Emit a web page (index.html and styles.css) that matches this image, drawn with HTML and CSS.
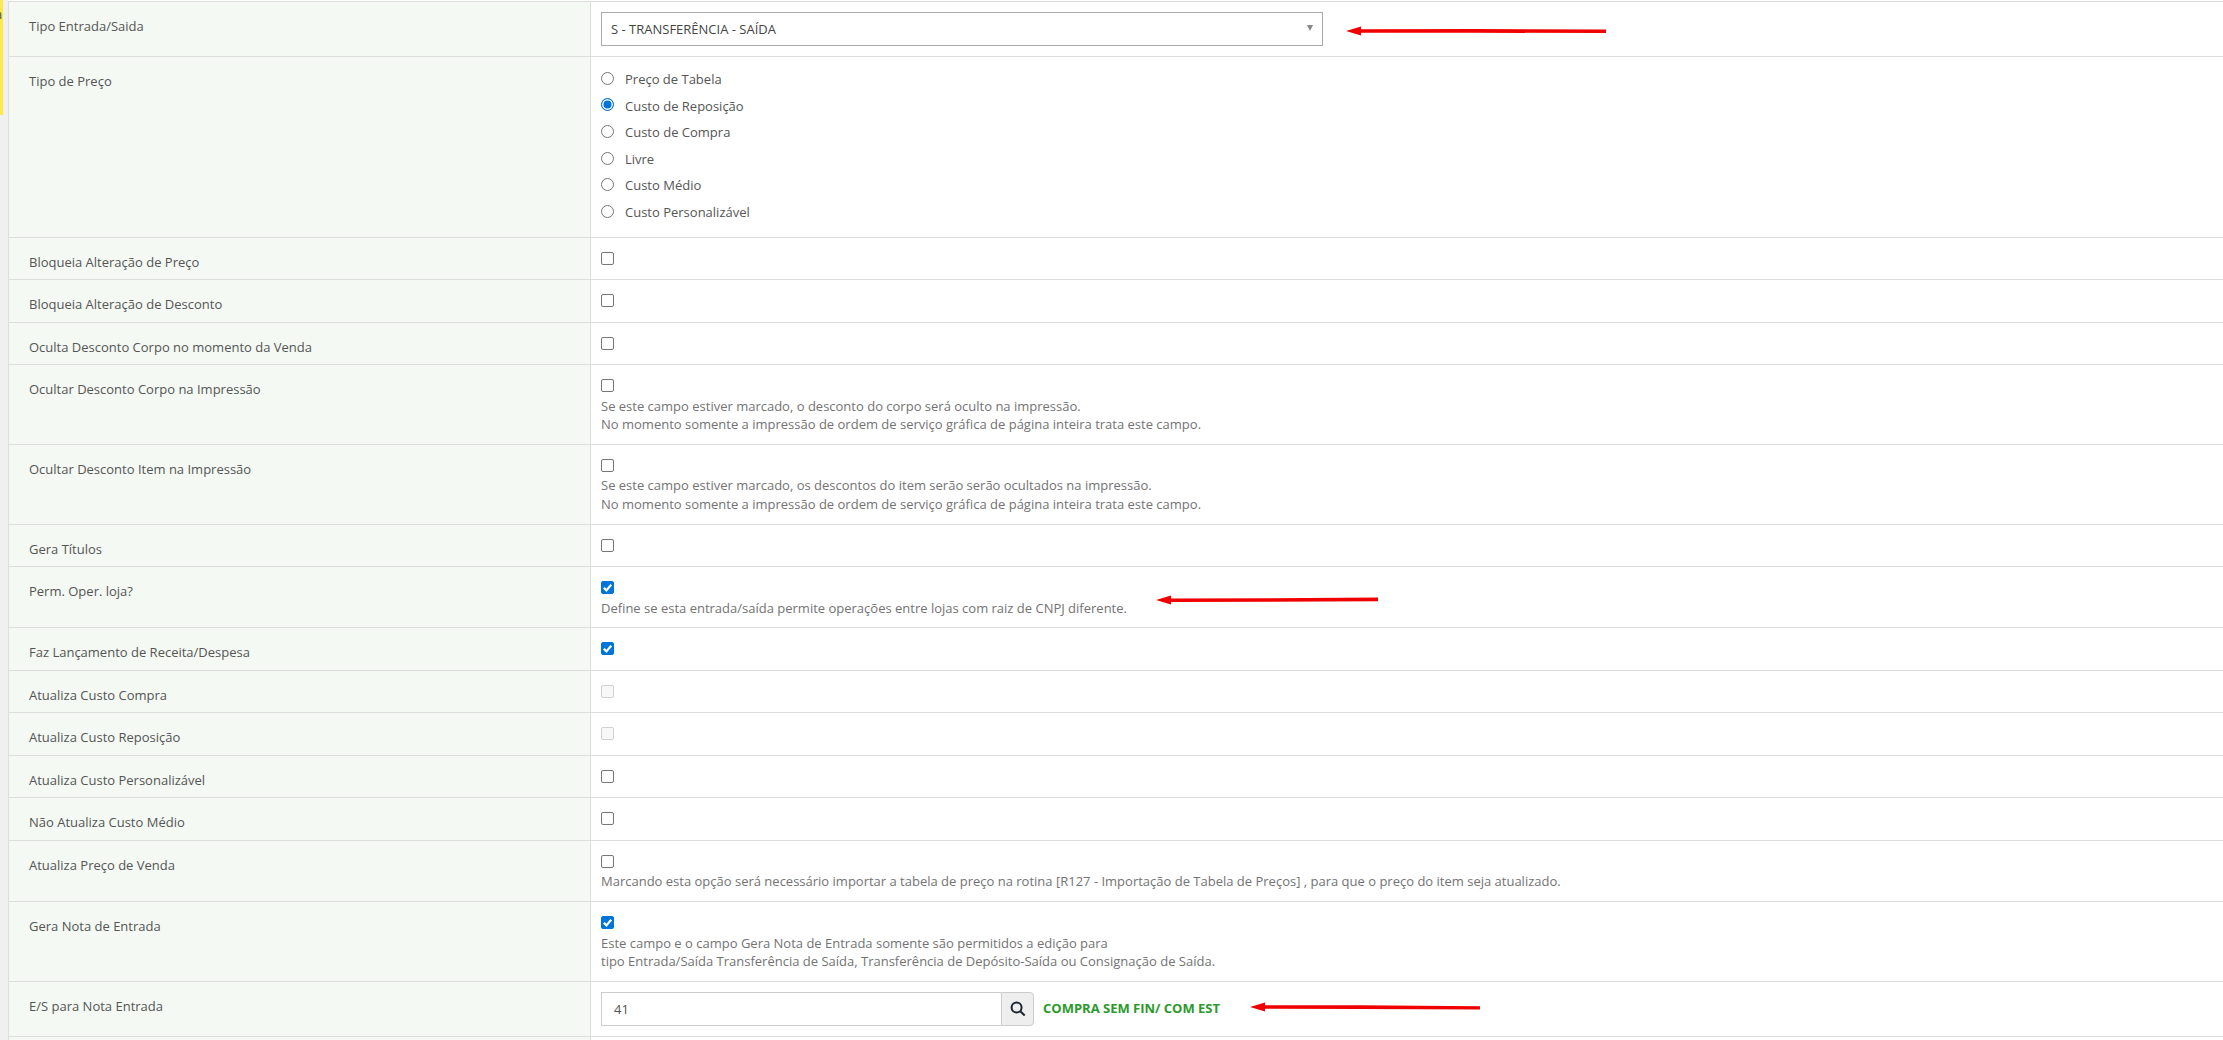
FILE: index.html
```html
<!DOCTYPE html>
<html lang="pt-BR">
<head>
  <meta charset="UTF-8"/>
  <title>Tipo Entrada/Saida</title>
  <link rel="stylesheet" href="styles.css">
</head>
<body>
  <div class="side-strip"><span class="side-letter">a</span></div>

  <table class="form-table">
    <tr>
      <td class="label">Tipo Entrada/Saida</td>
      <td class="value">
        <div class="select-box">
          <span>S - TRANSFERÊNCIA - SAÍDA</span>
          <i class="select-caret"></i>
        </div>
      </td>
    </tr>
    <tr>
      <td class="label">Tipo de Preço</td>
      <td class="value">
        <label class="radio-line"><i class="radio"></i>Preço de Tabela</label>
        <label class="radio-line"><i class="radio on"></i>Custo de Reposição</label>
        <label class="radio-line"><i class="radio"></i>Custo de Compra</label>
        <label class="radio-line"><i class="radio"></i>Livre</label>
        <label class="radio-line"><i class="radio"></i>Custo Médio</label>
        <label class="radio-line"><i class="radio"></i>Custo Personalizável</label>
      </td>
    </tr>
    <tr>
      <td class="label">Bloqueia Alteração de Preço</td>
      <td class="value"><div class="check-line"><i class="check"></i></div></td>
    </tr>
    <tr>
      <td class="label">Bloqueia Alteração de Desconto</td>
      <td class="value"><div class="check-line"><i class="check"></i></div></td>
    </tr>
    <tr>
      <td class="label">Oculta Desconto Corpo no momento da Venda</td>
      <td class="value"><div class="check-line"><i class="check"></i></div></td>
    </tr>
    <tr>
      <td class="label">Ocultar Desconto Corpo na Impressão</td>
      <td class="value">
        <div class="check-line"><i class="check"></i></div>
        <p class="note">Se este campo estiver marcado, o desconto do corpo será oculto na impressão.<br>No momento somente a impressão de ordem de serviço gráfica de página inteira trata este campo.</p>
      </td>
    </tr>
    <tr>
      <td class="label">Ocultar Desconto Item na Impressão</td>
      <td class="value">
        <div class="check-line"><i class="check"></i></div>
        <p class="note">Se este campo estiver marcado, os descontos do item serão serão ocultados na impressão.<br>No momento somente a impressão de ordem de serviço gráfica de página inteira trata este campo.</p>
      </td>
    </tr>
    <tr>
      <td class="label">Gera Títulos</td>
      <td class="value"><div class="check-line"><i class="check"></i></div></td>
    </tr>
    <tr>
      <td class="label">Perm. Oper. loja?</td>
      <td class="value">
        <div class="check-line"><i class="check on"><svg viewBox="0 0 13 13"><path d="M2.8 6.8l2.6 2.6L10.2 3.8"/></svg></i></div>
        <p class="note">Define se esta entrada/saída permite operações entre lojas com raiz de CNPJ diferente.</p>
      </td>
    </tr>
    <tr>
      <td class="label">Faz Lançamento de Receita/Despesa</td>
      <td class="value"><div class="check-line"><i class="check on"><svg viewBox="0 0 13 13"><path d="M2.8 6.8l2.6 2.6L10.2 3.8"/></svg></i></div></td>
    </tr>
    <tr>
      <td class="label">Atualiza Custo Compra</td>
      <td class="value"><div class="check-line"><i class="check off"></i></div></td>
    </tr>
    <tr>
      <td class="label">Atualiza Custo Reposição</td>
      <td class="value"><div class="check-line"><i class="check off"></i></div></td>
    </tr>
    <tr>
      <td class="label">Atualiza Custo Personalizável</td>
      <td class="value"><div class="check-line"><i class="check"></i></div></td>
    </tr>
    <tr>
      <td class="label">Não Atualiza Custo Médio</td>
      <td class="value"><div class="check-line"><i class="check"></i></div></td>
    </tr>
    <tr>
      <td class="label">Atualiza Preço de Venda</td>
      <td class="value">
        <div class="check-line"><i class="check"></i></div>
        <p class="note">Marcando esta opção será necessário importar a tabela de preço na rotina [R127 - Importação de Tabela de Preços] , para que o preço do item seja atualizado.</p>
      </td>
    </tr>
    <tr>
      <td class="label">Gera Nota de Entrada</td>
      <td class="value">
        <div class="check-line"><i class="check on"><svg viewBox="0 0 13 13"><path d="M2.8 6.8l2.6 2.6L10.2 3.8"/></svg></i></div>
        <p class="note">Este campo e o campo Gera Nota de Entrada somente são permitidos a edição para<br>tipo Entrada/Saída Transferência de Saída, Transferência de Depósito-Saída ou Consignação de Saída.</p>
      </td>
    </tr>
    <tr>
      <td class="label">E/S para Nota Entrada</td>
      <td class="value">
        <div class="lookup">
          <div class="lookup-input">41</div>
          <div class="lookup-btn">
            <svg viewBox="0 0 16 16"><circle cx="6.6" cy="6.6" r="5"/><path d="M10.3 10.3l4.4 4.2"/></svg>
          </div>
          <span class="lookup-name">COMPRA SEM FIN/ COM EST</span>
        </div>
      </td>
    </tr>
    <tr>
      <td class="label"></td>
      <td class="value"></td>
    </tr>
  </table>

  <!-- red annotation arrows drawn over the print -->
  <svg class="arrow arrow-select" viewBox="0 0 260 10"><path d="M0 5L15 .5V3.2L130 3L260 3.4V7L130 6.8L15 6.8V9.5Z"/></svg>
  <svg class="arrow arrow-loja" viewBox="0 0 222 10"><path d="M0 5L15 .5V3.4L110 3.2L222 2.6V6.2L110 6.8L15 7V9.5Z"/></svg>
  <svg class="arrow arrow-nota" viewBox="0 0 230 10"><path d="M0 5L15 .5V3.2L110 3.2L230 4.2V7.6L110 7L15 6.8V9.5Z"/></svg>
</body>
</html>
```

FILE: styles.css
```css
*, *::before, *::after {
  box-sizing: border-box;
}
html, body {
  height: 1040px;
  overflow: hidden;
}
body {
  margin: 0;
  padding: 1px 0 0 8px;
  position: relative;
  font-family: 'Open Sans', sans-serif;
  font-size: 13px;
  line-height: 1.42857;
  color: #555;
  background: #fff;
}

/* bit of the page behind, on the left */
.side-strip {
  position: absolute;
  top: 0;
  left: 0;
  width: 8px;
  height: 100%;
  background: #f0f0f0;
  overflow: hidden;
}
.side-strip::before {
  content: "";
  position: absolute;
  top: 0;
  left: 0;
  width: 3px;
  height: 115px;
  background: #ffe94a;
}
.side-letter {
  position: absolute;
  top: 5px;
  left: -5px;
  color: #555;
}

.form-table {
  width: 100%;
  border-collapse: collapse;
  table-layout: fixed;
  border-top: 1px solid #ddd;
}
.form-table tr {
  border-bottom: 1px solid #ddd;
}
.label {
  width: 582px;
  padding: 15px 20px 0;
  vertical-align: top;
  background: #f4f9f4;
  border-right: 1px solid #ddd;
  border-left: 1px solid #ddd;
}
.value {
  padding: 10px;
  vertical-align: top;
}

.select-box {
  display: flex;
  align-items: center;
  justify-content: space-between;
  width: 722px;
  height: 34px;
  padding: 0 9px;
  border: 1px solid #aaa;
  background: #fff;
  color: #444;
}
.select-caret {
  width: 0;
  height: 0;
  margin-top: -2px;
  border-left: 3.5px solid transparent;
  border-right: 3.5px solid transparent;
  border-top: 6px solid #888;
}

.radio-line {
  display: flex;
  align-items: center;
  height: 26.6px;
  padding-bottom: 2px;
  color: #555;
}
.radio {
  width: 13px;
  height: 13px;
  margin: -2px 11px 0 0;
  border: 1px solid #767676;
  border-radius: 50%;
  background: #fff;
}
.radio.on {
  border: 1.5px solid #0075d9;
  box-shadow: inset 0 0 0 1.5px #fff;
  background: #0075d9;
}

.check-line {
  height: 21.55px;
  padding-top: 4px;
}
.check {
  display: block;
  width: 13px;
  height: 13px;
  border: 1px solid #767676;
  border-radius: 2px;
  background: #fff;
}
.check.on {
  border-color: #0075d9;
  background: #0075d9;
}
.check.on svg {
  display: block;
  width: 13px;
  height: 13px;
  margin: -1px;
  fill: none;
  stroke: #fff;
  stroke-width: 2.2;
}
.check.off {
  border-color: #d0d0d0;
  background: #f8f8f8;
}

.note {
  margin: 0;
  color: #737373;
}

.lookup {
  display: flex;
  align-items: center;
  height: 34px;
}
.lookup-input {
  width: 400px;
  height: 34px;
  padding: 7px 12px;
  border: 1px solid #ccc;
  border-right: 0;
  background: #fff;
}
.lookup-btn {
  display: flex;
  align-items: center;
  justify-content: center;
  width: 33px;
  height: 34px;
  border: 1px solid #ccc;
  border-radius: 0 4px 4px 0;
  background: #eee;
}
.lookup-btn svg {
  width: 16px;
  height: 16px;
  fill: none;
  stroke: #1c2433;
  stroke-width: 2;
}
.lookup-name {
  margin-left: 9px;
  font-size: 13px;
  font-weight: 700;
  color: #2a9a2a;
}

.arrow {
  position: absolute;
  height: 10px;
  fill: #f00000;
}
.arrow-select { top: 26px; left: 1346px; width: 260px; }
.arrow-loja { top: 595px; left: 1156px; width: 222px; }
.arrow-nota { top: 1002px; left: 1250px; width: 230px; }
```
